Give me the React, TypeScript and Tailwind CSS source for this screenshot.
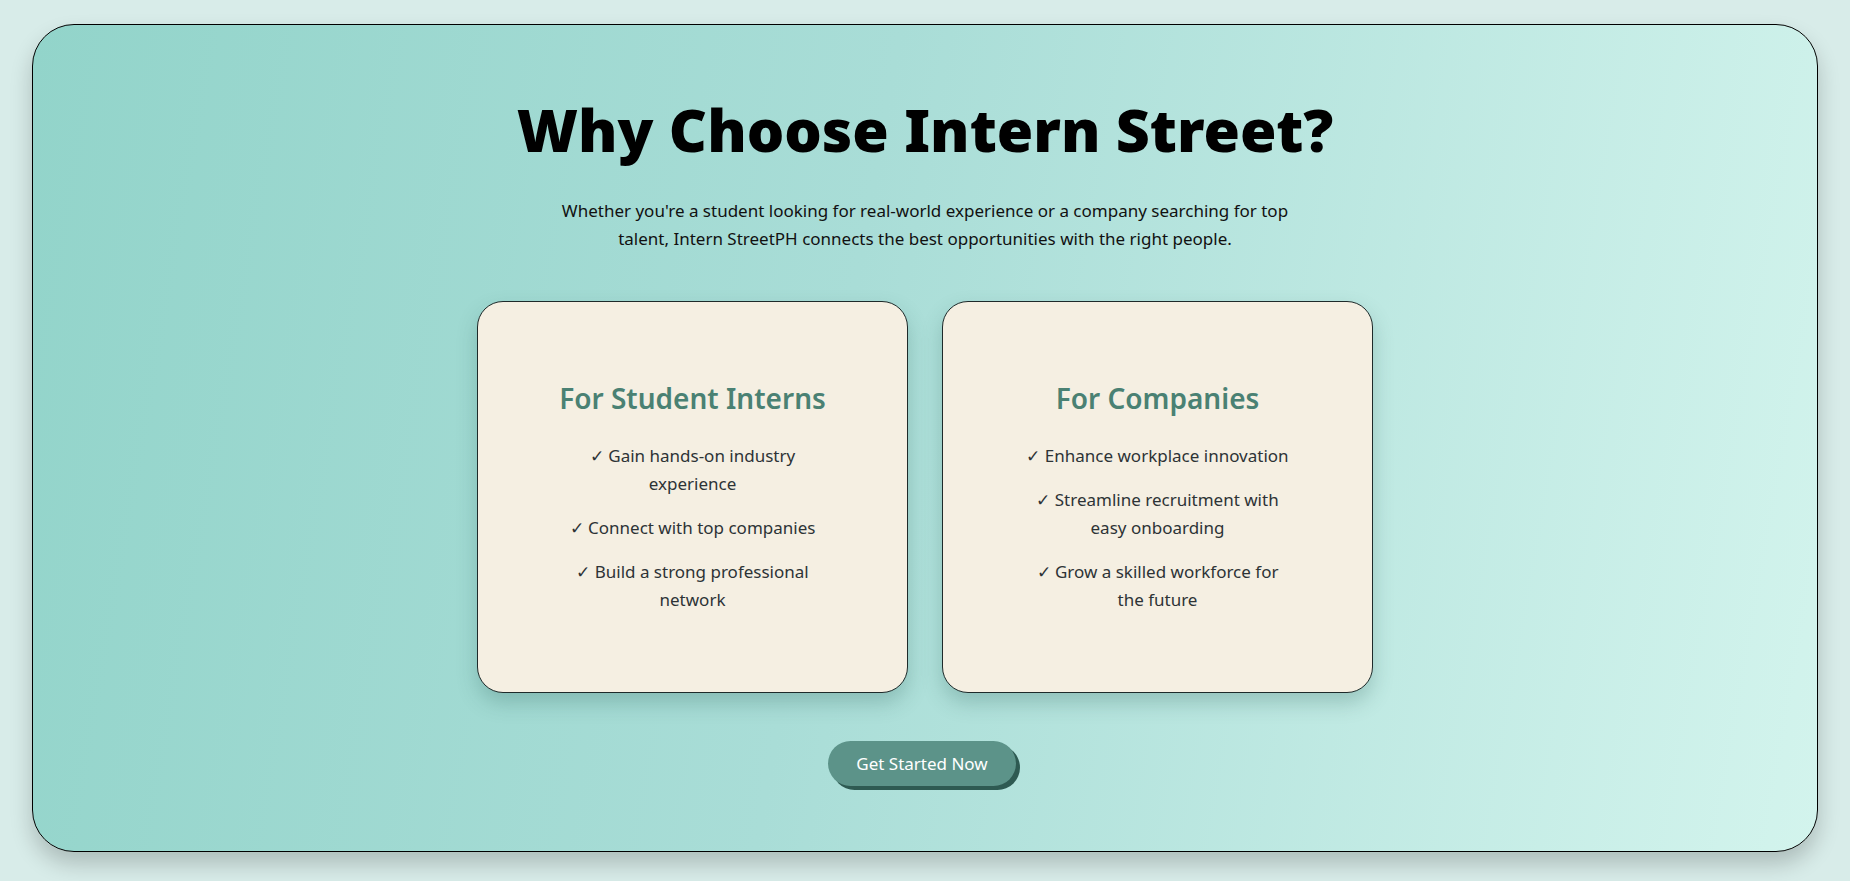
import React from "react";

const students = [
  "✓ Gain hands-on industry experience",
  "✓ Connect with top companies",
  "✓ Build a strong professional network",
];
const companies = [
  "✓ Enhance workplace innovation",
  "✓ Streamline recruitment with easy onboarding",
  "✓ Grow a skilled workforce for the future",
];

function Card({ title, items }: { title: string; items: string[] }) {
  return (
    <div className="w-[431px] h-[392px] rounded-[26px] border border-[#1e2a2a] bg-[#f5efe2] shadow-[0_10px_20px_rgba(40,90,85,0.25)] flex flex-col items-center justify-center">
      <h3 className="text-[28px] leading-[36px] font-semibold text-[#4a8173]">{title}</h3>
      <ul className="mt-[26px] w-[270px] flex flex-col gap-[16px] text-[17px] leading-[28px] text-[#2d3336] text-center">
        {items.map((t) => (
          <li key={t}>{t}</li>
        ))}
      </ul>
    </div>
  );
}

export default function App() {
  return (
    <div
      className="w-[1850px] h-[881px] bg-[#d8ece9] pt-[24px] pl-[32px]"
      style={{ fontFamily: '"Noto Sans", "Open Sans", sans-serif' }}
    >
      <div className="w-[1786px] h-[828px] rounded-[42px] border border-black bg-[linear-gradient(100deg,#92d4ca_0%,#a9ddd7_45%,#d3f4ed_100%)] shadow-[0_12px_22px_rgba(0,0,0,0.2)] flex flex-col items-center">
        <h1 className="mt-[68px] text-[59px] leading-[72px] font-black text-black">
          Why Choose Intern Street?
        </h1>
        <p className="mt-[32px] w-[760px] text-center text-[17px] leading-[28px] text-[#111]">
          Whether you're a student looking for real-world experience or a company searching for top talent, Intern StreetPH connects the best opportunities with the right people.
        </p>
        <div className="mt-[48px] flex gap-[34px]">
          <Card title="For Student Interns" items={students} />
          <Card title="For Companies" items={companies} />
        </div>
        <button className="mt-[48px] mr-[6px] h-[45px] px-[28px] rounded-full bg-[#5c9389] text-white text-[17px] shadow-[4px_4px_0_#2e5a52]">
          Get Started Now
        </button>
      </div>
    </div>
  );
}
